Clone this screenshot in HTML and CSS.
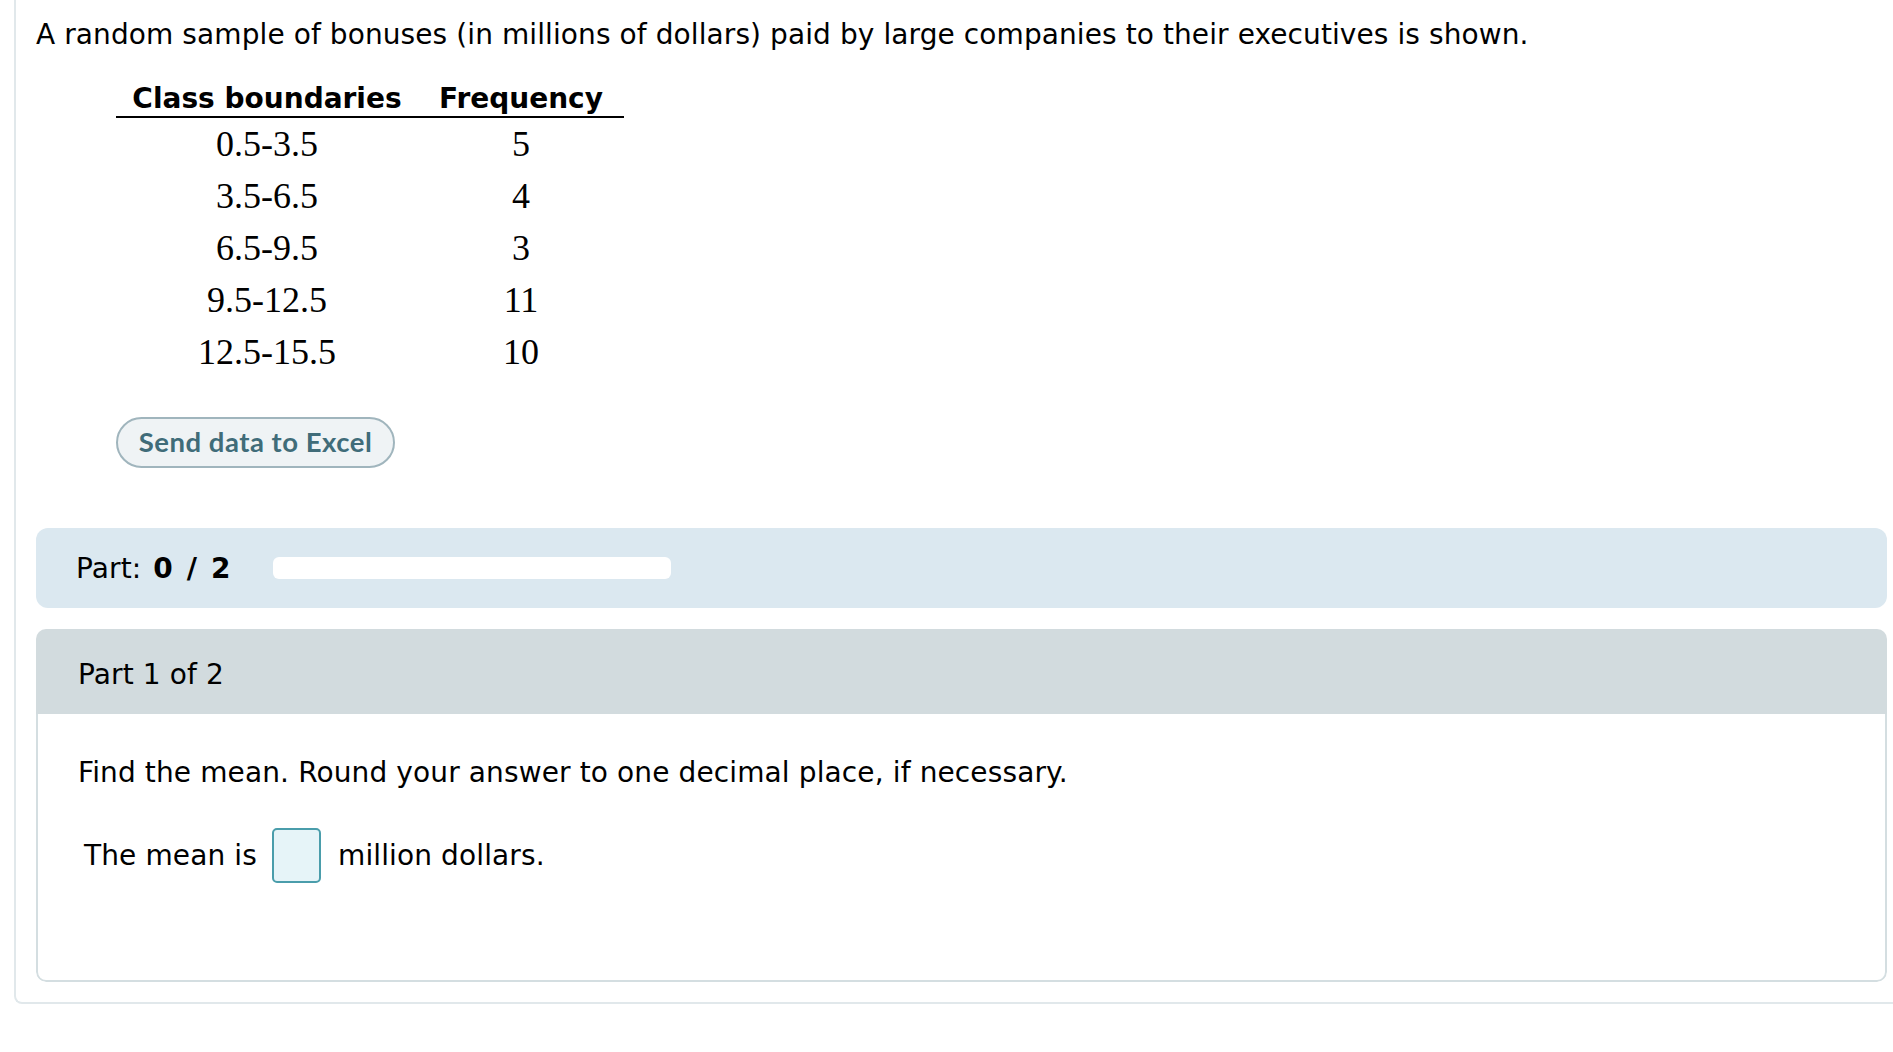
FILE: index.html
```html
<!DOCTYPE html>
<html lang="en">
<head>
<meta charset="utf-8">
<title>Bonuses</title>
<link rel="stylesheet" href="styles.css">
</head>
<body>
<div class="page">
  <p class="intro">A random sample of bonuses (in millions of dollars) paid by large companies to their executives is shown.</p>
  <table class="freq">
    <thead>
      <tr><th class="c1">Class boundaries</th><th class="c2">Frequency</th></tr>
    </thead>
    <tbody>
      <tr><td>0.5-3.5</td><td>5</td></tr>
      <tr><td>3.5-6.5</td><td>4</td></tr>
      <tr><td>6.5-9.5</td><td>3</td></tr>
      <tr><td>9.5-12.5</td><td>11</td></tr>
      <tr><td>12.5-15.5</td><td>10</td></tr>
    </tbody>
  </table>
  <button class="excel" type="button">Send data to Excel</button>
  <div class="part-bar">
    <span class="part-label">Part: <b>0 / 2</b></span>
    <div class="progress"></div>
  </div>
  <div class="part-box">
    <div class="part-head">Part 1 of 2</div>
    <div class="part-body">
      <p class="question">Find the mean. Round your answer to one decimal place, if necessary.</p>
      <div class="answer">
        <span>The mean is</span>
        <span class="input"></span>
        <span>million dollars.</span>
      </div>
    </div>
  </div>
</div>
</body>
</html>
```

FILE: styles.css
```css
html, body {
  margin: 0;
  padding: 0;
  background: #ffffff;
  overflow: hidden;
}
body {
  font-family: "DejaVu Sans", Verdana, sans-serif;
  font-size: 28px;
  letter-spacing: 0.12px;
  color: #000;
}
.page {
  margin-left: 14px;
  border-left: 2px solid #e1e8eb;
  border-bottom: 2px solid #e1e8eb;
  border-bottom-left-radius: 8px;
  padding: 18px 6px 20px 20px;
  width: 1851px;
}
.intro {
  margin: 0;
  line-height: 34px;
  letter-spacing: 0.09px;
}
.freq {
  margin: 30px 0 0 80px;
  border-collapse: collapse;
  letter-spacing: 0;
}
.freq th {
  font-weight: bold;
  height: 34px;
  line-height: 34px;
  padding: 0;
  text-align: center;
  border-bottom: 2px solid #000;
  vertical-align: middle;
}
.freq .c1 { width: 302px; }
.freq .c2 { width: 206px; }
.freq td {
  font-family: "Liberation Serif", "Times New Roman", serif;
  font-size: 36px;
  height: 52px;
  padding: 0;
  text-align: center;
  vertical-align: middle;
  line-height: 52px;
}
.excel {
  display: block;
  margin: 39px 0 0 80px;
  width: 279px;
  height: 51px;
  border: 2px solid #a0b5bd;
  border-radius: 26px;
  background: #eff3f5;
  color: #406c79;
  font-family: Lato, "Open Sans", sans-serif;
  font-weight: bold;
  font-size: 27.5px;
  letter-spacing: 0.5px;
  padding: 0 0 2px 0;
}
.part-bar {
  margin-top: 60px;
  height: 80px;
  background: #dbe8f0;
  border-radius: 12px;
  display: flex;
  align-items: center;
  padding-left: 40px;
}
.part-label {
  line-height: 34px;
  position: relative;
  top: 1px;
  word-spacing: 3px;
}
.part-label b {
  word-spacing: 4px;
}
.progress {
  width: 398px;
  height: 22px;
  margin-left: 42px;
  background: #ffffff;
  border-radius: 6px;
}
.part-box {
  margin-top: 21px;
  border-radius: 10px;
  overflow: hidden;
}
.part-head {
  height: 79px;
  padding-top: 6px;
  background: #d2dbde;
  display: flex;
  align-items: center;
  padding-left: 42px;
  line-height: 34px;
}
.part-body {
  border: 2px solid #d4dee1;
  border-top: none;
  border-radius: 0 0 10px 10px;
  padding: 42px 0 97px 40px;
}
.question {
  margin: 0;
  line-height: 34px;
}
.answer {
  margin-top: 38px;
  display: flex;
  align-items: center;
  padding-left: 6px;
  line-height: 34px;
}
.input {
  display: block;
  width: 45px;
  height: 51px;
  border: 2px solid #4a9dab;
  border-radius: 5px;
  background: #e6f4f8;
  margin: 0 17px 0 15px;
}
```
